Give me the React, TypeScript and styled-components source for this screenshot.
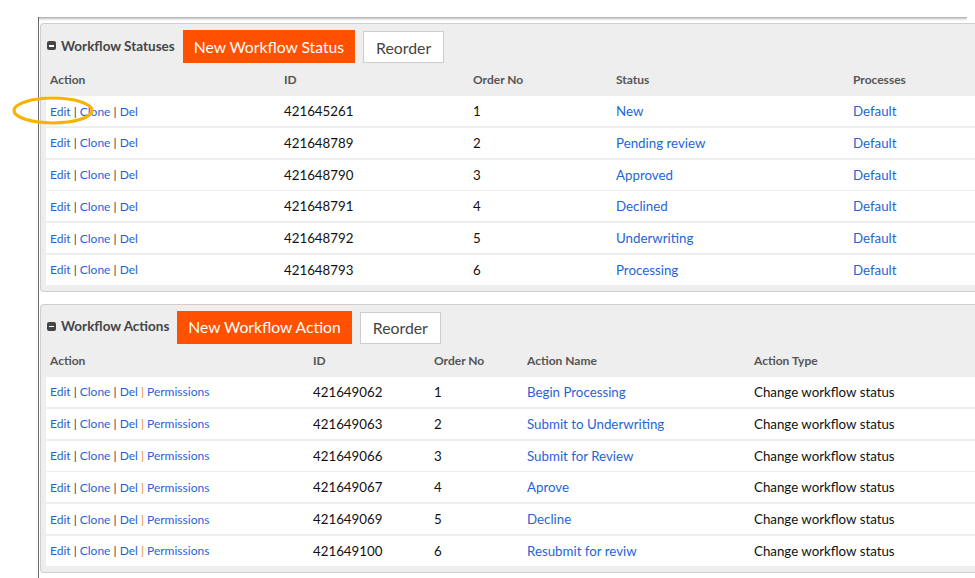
import React from "react";
import styled, { createGlobalStyle } from "styled-components";

const GlobalStyle = createGlobalStyle`
  html, body { margin: 0; padding: 0; background: #ffffff; overflow: hidden; }
  body { font-family: Lato, "Open Sans", "Liberation Sans", sans-serif; }
`;

const Page = styled.div`
  position: relative;
  padding-top: 17px;
  width: 975px;
  height: 578px;
  box-sizing: border-box;
`;

const Frame = styled.div`
  margin-left: 38px;
  border-left: 1px solid #6a6a6a;
  width: 960px;
  height: 561px;
  display: flex;
  flex-direction: column;
`;

const TopShade = styled.div`
  height: 4px;
  width: 928px;
  background: linear-gradient(to bottom, #a8a8a8 0%, #dcdcdc 45%, rgba(255, 255, 255, 0) 100%);
`;

const Stack = styled.div`
  margin-top: 2px;
  margin-left: 1px;
  display: flex;
  flex-direction: column;
  gap: 12px;
`;

const Panel = styled.section`
  background: #eeeeee;
  border: 1px solid #cfcfcf;
  border-right: none;
  border-radius: 4px 0 0 4px;
  padding: 6px 0 6px 5px;
`;

const PanelHeader = styled.div`
  display: flex;
  align-items: center;
  height: 33px;
  gap: 8px;
`;

const Title = styled.h2`
  margin: 0 0 2px 1px;
  display: flex;
  align-items: center;
  gap: 5px;
  font-size: 13.5px;
  font-weight: 700;
  color: #454545;
`;

const CollapseIcon = styled.span`
  position: relative;
  width: 9px;
  height: 9px;
  border-radius: 2px;
  background: #454545;
  &::after {
    content: "";
    position: absolute;
    left: 2px;
    top: 4px;
    width: 5px;
    height: 1.5px;
    background: #ffffff;
  }
`;

const PrimaryButton = styled.button`
  height: 33px;
  padding: 0 11px;
  border: none;
  background: #ff5100;
  color: #ffffff;
  font-family: inherit;
  font-size: 15.7px;
`;

const GhostButton = styled.button`
  height: 32px;
  margin-top: 1px;
  padding: 0 12px;
  border: 1px solid #cdcdcd;
  background: #ffffff;
  color: #444444;
  font-family: inherit;
  font-size: 15.8px;
`;

const HeadRow = styled.div<{ $cols: string }>`
  display: grid;
  grid-template-columns: ${(p) => p.$cols};
  height: 33px;
  align-items: center;
  font-size: 12px;
  font-weight: 700;
  color: #555555;
`;

const Rows = styled.div`
  display: flex;
  flex-direction: column;
  gap: 1.8px;
`;

const Row = styled.div<{ $cols: string }>`
  display: grid;
  grid-template-columns: ${(p) => p.$cols};
  height: 30px;
  align-items: center;
  background: #ffffff;
  font-size: 13.3px;
  color: #111111;
`;

const Cell = styled.div`
  padding-left: 4px;
  white-space: nowrap;
`;

const ActionCell = styled(Cell)`
  font-size: 12px;
`;

const Link = styled.span`
  color: #1f65d6;
`;

const Sep = styled.span<{ $accent?: boolean }>`
  color: ${(p) => (p.$accent ? "#e39230" : "#333333")};
`;

const Annotation = styled.svg`
  position: absolute;
  left: 12px;
  top: 96px;
  pointer-events: none;
`;

const statusCols = "234px 189px 143px 237px 1fr";
const actionCols = "263px 121px 93px 227px 1fr";

const statuses = [
  ["421645261", "1", "New"],
  ["421648789", "2", "Pending review"],
  ["421648790", "3", "Approved"],
  ["421648791", "4", "Declined"],
  ["421648792", "5", "Underwriting"],
  ["421648793", "6", "Processing"],
];

const actions = [
  ["421649062", "1", "Begin Processing"],
  ["421649063", "2", "Submit to Underwriting"],
  ["421649066", "3", "Submit for Review"],
  ["421649067", "4", "Aprove"],
  ["421649069", "5", "Decline"],
  ["421649100", "6", "Resubmit for reviw"],
];

function Actions({ permissions }: { permissions?: boolean }) {
  return (
    <ActionCell>
      <Link>Edit</Link> <Sep>|</Sep> <Link>Clone</Link> <Sep>|</Sep> <Link>Del</Link>
      {permissions && (
        <>
          {" "}
          <Sep $accent>|</Sep> <Link>Permissions</Link>
        </>
      )}
    </ActionCell>
  );
}

export default function App() {
  return (
    <>
      <GlobalStyle />
      <Page>
        <Frame>
          <TopShade />
          <Stack>
            <Panel>
              <PanelHeader>
                <Title>
                  <CollapseIcon />
                  Workflow Statuses
                </Title>
                <PrimaryButton>New Workflow Status</PrimaryButton>
                <GhostButton>Reorder</GhostButton>
              </PanelHeader>
              <HeadRow $cols={statusCols}>
                <Cell>Action</Cell>
                <Cell>ID</Cell>
                <Cell>Order No</Cell>
                <Cell>Status</Cell>
                <Cell>Processes</Cell>
              </HeadRow>
              <Rows>
                {statuses.map(([id, order, name]) => (
                  <Row key={id} $cols={statusCols}>
                    <Actions />
                    <Cell>{id}</Cell>
                    <Cell>{order}</Cell>
                    <Cell>
                      <Link>{name}</Link>
                    </Cell>
                    <Cell>
                      <Link>Default</Link>
                    </Cell>
                  </Row>
                ))}
              </Rows>
            </Panel>
            <Panel>
              <PanelHeader>
                <Title>
                  <CollapseIcon />
                  Workflow Actions
                </Title>
                <PrimaryButton>New Workflow Action</PrimaryButton>
                <GhostButton>Reorder</GhostButton>
              </PanelHeader>
              <HeadRow $cols={actionCols}>
                <Cell>Action</Cell>
                <Cell>ID</Cell>
                <Cell>Order No</Cell>
                <Cell>Action Name</Cell>
                <Cell>Action Type</Cell>
              </HeadRow>
              <Rows>
                {actions.map(([id, order, name]) => (
                  <Row key={id} $cols={actionCols}>
                    <Actions permissions />
                    <Cell>{id}</Cell>
                    <Cell>{order}</Cell>
                    <Cell>
                      <Link>{name}</Link>
                    </Cell>
                    <Cell>Change workflow status</Cell>
                  </Row>
                ))}
              </Rows>
            </Panel>
          </Stack>
        </Frame>
        <Annotation width="84" height="30" viewBox="0 0 84 30">
          <ellipse cx="41" cy="14.5" rx="39" ry="12.5" fill="none" stroke="#f6b400" strokeWidth="3.2" />
        </Annotation>
      </Page>
    </>
  );
}
